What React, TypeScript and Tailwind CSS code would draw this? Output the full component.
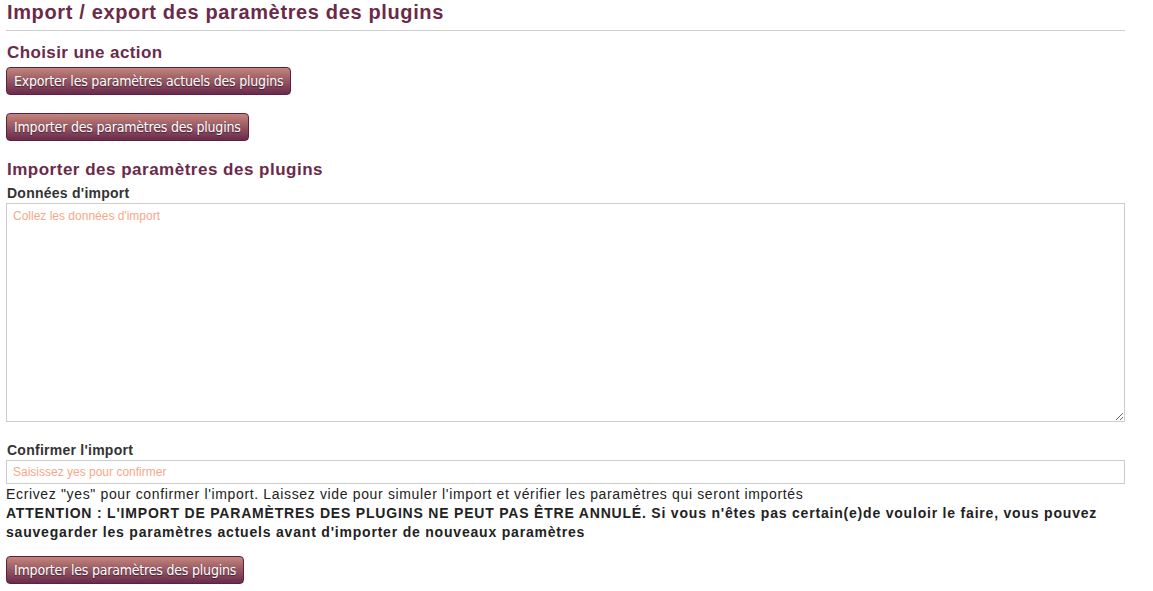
import React from 'react';

const btn =
  "inline-block h-[28px] rounded-[4px] border border-[#5c2142] bg-gradient-to-b from-[#c4857b] to-[#6a2a4c] px-[7px] text-[14px] tracking-[-0.2px] text-white [font-family:'Liberation_Sans_Narrow','DejaVu_Sans_Condensed',sans-serif] [text-shadow:0_1px_1px_rgba(0,0,0,0.5)] leading-[26px]";

export default function App() {
  return (
    <div className="w-[1153px] h-[591px] bg-white px-[6px] text-[#333] [font-family:'Liberation_Sans',Arial,sans-serif]">
      <div className="w-[1119px]">
        <h1 className="pt-[1px] pl-[1px] text-[20px] font-bold leading-[22px] tracking-[0.64px] text-[#6b2a4a]">
          Import / export des paramètres des plugins
        </h1>
        <hr className="mt-[7px] border-t border-[#cfcfcf]" />
        <h2 className="mt-[12px] pl-[1px] text-[17px] font-bold leading-[20px] tracking-[0.4px] text-[#6b2a4a]">
          Choisir une action
        </h2>
        <div className="mt-[4px]">
          <button className={btn}>Exporter les paramètres actuels des plugins</button>
        </div>
        <div className="mt-[18px]">
          <button className={btn}>Importer des paramètres des plugins</button>
        </div>
        <h2 className="mt-[19px] pl-[1px] text-[17px] font-bold leading-[20px] tracking-[0.5px] text-[#6b2a4a]">
          Importer des paramètres des plugins
        </h2>
        <label className="mt-[5px] block pl-[1px] text-[14px] font-bold leading-[16px] tracking-[0.25px]">
          Données d'import
        </label>
        <textarea
          className="mt-[2px] block h-[219px] w-full resize border border-[#ccc] px-[6px] py-[3px] text-[12px] placeholder:text-[#f7a78c] outline-none"
          placeholder="Collez les données d'import"
        />
        <label className="mt-[20px] block pl-[1px] text-[14px] font-bold leading-[16px] tracking-[0.25px]">
          Confirmer l'import
        </label>
        <input
          className="mt-[2px] block h-[24px] w-full border border-[#ccc] px-[6px] text-[12px] placeholder:text-[#f7a78c] outline-none"
          placeholder="Saisissez yes pour confirmer"
        />
        <p className="mt-[1px] text-[14px] leading-[19px] tracking-[0.65px] text-[#222]">
          Ecrivez "yes" pour confirmer l'import. Laissez vide pour simuler l'import et vérifier les paramètres qui seront importés
        </p>
        <p className="w-[1100px] text-[14px] font-bold leading-[19px] tracking-[0.8px] text-[#222]">
          ATTENTION : L'IMPORT DE PARAMÈTRES DES PLUGINS NE PEUT PAS ÊTRE ANNULÉ. Si vous n'êtes pas certain(e)de vouloir le faire, vous pouvez sauvegarder les paramètres actuels avant d'importer de nouveaux paramètres
        </p>
        <div className="mt-[14px]">
          <button className={btn}>Importer les paramètres des plugins</button>
        </div>
      </div>
    </div>
  );
}
